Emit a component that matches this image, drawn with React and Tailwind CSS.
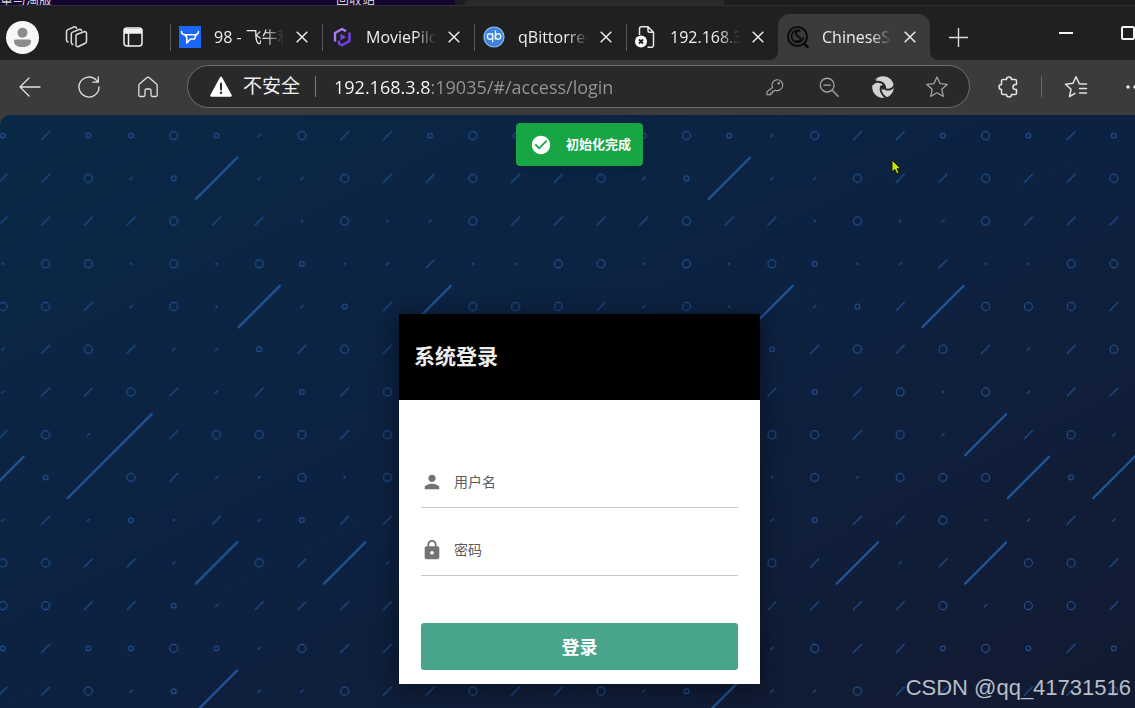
import { useState } from 'react';
import { MdPerson, MdLock, MdCheckCircle } from 'react-icons/md';

// One tile of the wallpaper: O ring, o small ring, . dot, / dash, ' short dash, L streak
const TILE = [
  "o/ooOo'O//oO",
  "//O'oL''O//O",
  "////O//.O.'O",
  ".OO.O.Oo.'/.",
  "OO/'O.L'o/LO",
  "'/O/''o/O/O/",
  "'//O/'/o/O.O",
  "/O' /OOO/O'L",
  "Lo O/'.O.OOO",
  "'/'o./'o//O.",
  "OO//'LO/L'/L",
  "OO//o'////O'",
];
const CELL = 42.73;

const Mark = ({ kind, x, y }) => {
  if (kind === 'O') return <circle cx={x} cy={y} r="4" />;
  if (kind === 'o') return <circle cx={x} cy={y} r="2.4" />;
  if (kind === '.') return <circle cx={x} cy={y} r="0.6" />;
  if (kind === '/') return <path d={`M${x - 4.4} ${y + 4.4}l8.8-8.8`} />;
  if (kind === "'") return <path d={`M${x - 1.6} ${y + 1.6}l3.2-3.2`} />;
  if (kind === 'L') return <path d={`M${x - 21.3} ${y + 21.3}l42.6-42.6`} strokeWidth="2" stroke="#215a9f" />;
  return null;
};

const Wallpaper = () => (
  <svg className="absolute inset-0 w-full h-full" aria-hidden="true">
    <defs>
      <pattern id="marks" x="-18.5" y="-0.7" width={CELL * 12} height={CELL * 12} patternUnits="userSpaceOnUse">
        <g fill="none" stroke="#21569c" strokeWidth="1">
          {TILE.map((row, r) =>
            row.split('').map((kind, c) => (
              <Mark key={`${r}-${c}`} kind={kind} x={(c + 0.5) * CELL} y={(r + 0.5) * CELL} />
            ))
          )}
          <path d={`M${CELL * 2} ${CELL * 9}L${CELL * 4} ${CELL * 7}`} strokeWidth="2" stroke="#215a9f" />
        </g>
      </pattern>
    </defs>
    <rect width="100%" height="100%" fill="url(#marks)" />
  </svg>
);

const Icon = ({ size = 24, children }) => (
  <svg
    width={size}
    height={size}
    viewBox="0 0 24 24"
    fill="none"
    stroke="currentColor"
    strokeWidth="1.5"
    strokeLinecap="round"
    strokeLinejoin="round"
    className="shrink-0"
    aria-hidden="true"
  >
    {children}
  </svg>
);

const ToolButton = ({ label, className = '', children }) => (
  <button aria-label={label} className={`w-10 h-10 shrink-0 flex items-center justify-center ${className}`}>
    {children}
  </button>
);

const FnosIcon = () => (
  <svg width="22" height="22" viewBox="0 0 22 22" className="shrink-0" aria-hidden="true">
    <rect width="22" height="22" fill="#1a66f5" />
    <path d="M2.500 5.500c0 2 1 3 3 3.200M19.500 5.500c0 2-1 3-3 3.200" fill="none" stroke="#fff" strokeWidth="1.500" strokeLinecap="round" />
    <path d="M6 8.700h11l-1.500 4.300h-4L7.800 17V11.500z" fill="none" stroke="#fff" strokeWidth="1.600" strokeLinejoin="round" />
  </svg>
);

const MoviePilotIcon = () => (
  <svg width="22" height="22" viewBox="0 0 22 22" fill="none" className="shrink-0" aria-hidden="true">
    <path d="M4 15.500V7L11 3l4 2.300" stroke="#a97bf5" strokeWidth="2.400" strokeLinejoin="round" />
    <path d="M18.500 6.500V15L11 19.300 8 17.600v-3.100" stroke="#7a3fe8" strokeWidth="2.400" strokeLinejoin="round" />
    <path d="M9.500 7.800l5.500 3.200-5.500 3.200z" fill="#7d45ea" />
  </svg>
);

const QbIcon = () => (
  <svg width="22" height="22" viewBox="0 0 22 22" fill="none" className="shrink-0" aria-hidden="true">
    <circle cx="11" cy="11" r="10" fill="#3b83dc" stroke="#8cbcf2" strokeWidth="1.200" />
    <g stroke="#e4f1ff" strokeWidth="1.400" strokeLinecap="round">
      <circle cx="7" cy="10.500" r="2.700" />
      <path d="M9.700 7.800v8M12.400 5v8" />
      <circle cx="15.100" cy="10.500" r="2.700" />
    </g>
  </svg>
);

const BrokenPageIcon = () => (
  <svg width="22" height="22" viewBox="0 0 22 22" fill="none" className="shrink-0" aria-hidden="true">
    <path d="M4.500 9V2.800a2 2 0 0 1 2-2H13l5.500 5.500v13a2 2 0 0 1-2 2h-4M13 .8v4a1.500 1.500 0 0 0 1.500 1.500h4" stroke="#e8e8e8" strokeWidth="1.500" />
    <circle cx="6" cy="15.500" r="6" fill="#fff" />
    <path d="M4 13.500l4 4M8 13.500l-4 4" stroke="#202022" strokeWidth="1.800" />
  </svg>
);

const SubFinderIcon = () => (
  <svg width="22" height="22" viewBox="0 0 22 22" fill="none" stroke="#0c0c0d" className="shrink-0" aria-hidden="true">
    <circle cx="10.500" cy="10.500" r="9.500" strokeWidth="2" />
    <path d="M12 4.500a6 6 0 1 0 4.500 6.500" strokeWidth="1.600" />
    <path d="M13.500 4.500c-4 0-5.500 2-4.500 4s4.500 2 4.500 4.500c0 2-2.500 3-5 2" strokeWidth="2" />
    <path d="M17.500 18l3 3" strokeWidth="2.600" strokeLinecap="round" />
  </svg>
);

const tabs = [
  { title: '98 - 飞牛私有云', icon: FnosIcon },
  { title: 'MoviePilot', icon: MoviePilotIcon },
  { title: 'qBittorrent', icon: QbIcon },
  { title: '192.168.3.8', icon: BrokenPageIcon },
  { title: 'ChineseSubFinder', icon: SubFinderIcon },
];

const Tab = ({ title, icon: TabIcon, active, onSelect }) => (
  <div
    className={`relative w-[152px] h-[46px] shrink-0 flex items-center pl-2 pr-[10px] border-l ${
      active ? 'bg-[#3b3b3c] border-[#3b3b3c] rounded-t-xl' : 'border-transparent'
    }`}
  >
    {!active && <span className="absolute -left-px top-[10px] h-[27px] w-px bg-[#58585a]" />}
    {active && (
      <svg className="absolute -left-[9px] bottom-0 w-2 h-2" viewBox="0 0 8 8" fill="#3b3b3c" aria-hidden="true">
        <path d="M8 0v8H0a8 8 0 0 0 8-8z" />
      </svg>
    )}
    {active && (
      <svg className="absolute -right-2 bottom-0 w-2 h-2" viewBox="0 0 8 8" fill="#3b3b3c" aria-hidden="true">
        <path d="M0 0v8h8a8 8 0 0 1-8-8z" />
      </svg>
    )}
    <TabIcon />
    <button
      onClick={onSelect}
      className="ml-[13px] mr-2 w-[70px] overflow-hidden whitespace-nowrap text-left text-base text-[#ededed] mask-r-from-70% mask-r-to-100%"
    >
      {title}
    </button>
    <button aria-label={`关闭 ${title}`} className="w-5 h-5 flex items-center justify-center text-[#ececec]">
      <svg width="12" height="12" viewBox="0 0 12 12" stroke="currentColor" strokeWidth="1.500" aria-hidden="true">
        <path d="M.7.7l10.600 10.600M11.300.7L.7 11.300" />
      </svg>
    </button>
  </div>
);

const TabBar = () => {
  const [current, setCurrent] = useState(4);

  return (
    <div className="flex h-[55px] pt-[9px] pl-[6px] bg-[#202022] border-t border-[#303032]">
      <div className="flex items-center h-[46px] -mt-px">
        <button aria-label="用户配置" className="w-[33px] h-[33px] rounded-full bg-[#f7f7f7] flex items-center justify-center">
          <svg width="33" height="33" viewBox="0 0 33 33" fill="#8b8b8b" aria-hidden="true">
            <circle cx="16.500" cy="11.700" r="5" />
            <path d="M9.500 18.500h14a1.500 1.500 0 0 1 1.500 1.500c0 4-3.500 6-8.500 6S8 24 8 20a1.500 1.500 0 0 1 1.500-1.500z" />
          </svg>
        </button>
        <ToolButton label="工作区" className="ml-[17px] text-[#dedede]">
          <Icon>
            <path d="M12.500 9.500l7.500-2.800a1.800 1.800 0 0 1 2.500 1.700v8a2 2 0 0 1-1.300 1.900l-6.700 3.200a1.800 1.800 0 0 1-2.500-1.700v-8.500a2 2 0 0 1 .5-1.800z" />
            <path d="M8.800 19.500a2 2 0 0 1-1.500-2V9a2 2 0 0 1 1.300-1.900l6.500-2.600a2 2 0 0 1 2.600 1.200" />
            <path d="M4 17a2 2 0 0 1-1.500-2V6.500a2 2 0 0 1 1.300-1.900L10 2a2 2 0 0 1 2.600 1.200" />
          </Icon>
        </ToolButton>
        <ToolButton label="标签页操作" className="ml-[17px] mr-[17px] text-[#f2f2f2]">
          <Icon>
            <rect x="3" y="3" width="18" height="18" rx="3" />
            <path d="M3.500 4.500h17V8h-17z" fill="currentColor" />
            <path d="M7.500 8v13" />
          </Icon>
        </ToolButton>
        {tabs.map((tab, i) => (
          <Tab key={tab.title} {...tab} active={i === current} onSelect={() => setCurrent(i)} />
        ))}
        <ToolButton label="新建标签页" className="ml-2 text-[#dcdcdc]">
          <svg width="19" height="19" viewBox="0 0 19 19" stroke="currentColor" strokeWidth="1.400" aria-hidden="true">
            <path d="M9.500 0v19M0 9.500h19" />
          </svg>
        </ToolButton>
      </div>
      <div className="ml-auto flex h-[36px] text-white">
        <button aria-label="最小化" className="w-[62px] flex items-center justify-center">
          <span className="w-[14px] h-[2px] bg-[#f4f4f4]" />
        </button>
        <button aria-label="最大化" className="w-[62px] flex items-center justify-center">
          <span className="w-[14px] h-[14px] border-2 border-[#f4f4f4] rounded-[2px]" />
        </button>
      </div>
    </div>
  );
};

const Toolbar = () => (
  <div className="flex items-center h-[55px] pl-[10px] pr-1 pb-[2px] bg-[#3b3b3c] text-[#e2e2e2]">
    <div className="flex gap-[19px]">
      <ToolButton label="后退">
        <Icon>
          <path d="M22 12H2M11 3l-9 9 9 9" strokeWidth="1.300" />
        </Icon>
      </ToolButton>
      <ToolButton label="刷新">
        <Icon>
          <path d="M22 12A10 10 0 1 1 19.500 5.400L21 7M21.300 1.800V7.200h-5.400" strokeWidth="1.300" />
        </Icon>
      </ToolButton>
      <ToolButton label="主页">
        <Icon>
          <path d="M2.800 10.500a2 2 0 0 1 .7-1.500l7.200-6.300a2 2 0 0 1 2.600 0L20.500 9a2 2 0 0 1 .7 1.500V20a1.500 1.500 0 0 1-1.500 1.500h-3.200A1.500 1.500 0 0 1 15 20v-4.500a1.500 1.500 0 0 0-1.500-1.500h-3A1.500 1.500 0 0 0 9 15.500V20a1.500 1.500 0 0 1-1.500 1.500H4.300A1.500 1.500 0 0 1 2.800 20z" strokeWidth="1.300" />
        </Icon>
      </ToolButton>
    </div>

    {/* Address bar */}
    <div className="flex-1 flex items-center h-[43px] ml-[19px] pl-[22px] pr-3 rounded-full border border-[#6e6e70] bg-[#29282a]">
      <svg width="22" height="22" viewBox="0 0 22 22" className="shrink-0" aria-hidden="true">
        <path d="M11 2L20.500 19.500H1.500z" fill="#fff" stroke="#fff" strokeWidth="2.600" strokeLinejoin="round" />
        <path d="M11 7.500v6" stroke="#29282a" strokeWidth="2" strokeLinecap="round" />
        <circle cx="11" cy="16.700" r="1.200" fill="#29282a" />
      </svg>
      <label htmlFor="address" className="ml-[11px] text-[19px] text-[#f0f0f0] whitespace-nowrap">不安全</label>
      <span className="w-px h-[21px] ml-[15px] mr-[18px] bg-[#7a7a7c]" />
      <input
        id="address"
        type="text"
        defaultValue="192.168.3.8:19035/#/access/login"
        className="flex-1 min-w-0 text-lg text-transparent bg-clip-text bg-linear-to-r from-[#ffffff] from-[97px] to-[#969698] to-[97px] caret-white outline-none"
      />
      <div className="flex gap-[14px] text-[#a2a2a4]">
        <ToolButton label="密码">
          <Icon size={20}>
            <path d="M9 12.700a6.500 6.500 0 1 1 3.300 3.100L11 17H9.200v2H7v2.200H2.300v-3.500z" strokeWidth="1.400" />
            <circle cx="16.500" cy="7.500" r=".8" />
          </Icon>
        </ToolButton>
        <ToolButton label="缩小">
          <Icon size={22}>
            <circle cx="10" cy="10" r="7.500" />
            <path d="M15.500 15.500l6.500 6.500M6.500 10h7" />
          </Icon>
        </ToolButton>
        <ToolButton label="兼容模式">
          <svg width="22" height="22" viewBox="0 0 22 22" fill="none" aria-hidden="true">
            <circle cx="11" cy="11" r="10.800" fill="#d2d2d4" />
            <circle cx="11.500" cy="11" r="2.600" fill="#29282a" />
            <g stroke="#29282a" strokeWidth="1.900">
              <path d="M0 8c3-3 9-3.500 12.500 1" />
              <path d="M9.300 10c-1.800 4 .2 9 5.200 12" />
              <path d="M13 13c4 1.500 8 0 9.500-4" />
            </g>
            <path d="M0 4.500L5 3 2 8.500 0 9z" fill="#29282a" />
          </svg>
        </ToolButton>
        <ToolButton label="收藏">
          <Icon size={24}>
            <path d="M12 2l3 6.600 7.200.8-5.400 4.900 1.500 7.100L12 17.800l-6.300 3.600 1.500-7.100L1.800 9.400 9 8.600z" strokeWidth="1.300" />
          </Icon>
        </ToolButton>
      </div>
    </div>

    <ToolButton label="扩展" className="ml-[19px]">
      <Icon>
        <path d="M9.500 4.500a2.500 2.500 0 0 1 5 0H18A1.500 1.500 0 0 1 19.500 6v3.500h-1a2.500 2.500 0 0 0 0 5h1V18a1.500 1.500 0 0 1-1.500 1.500h-3.500a2.500 2.500 0 0 1-5 0H6A1.500 1.500 0 0 1 4.500 18v-3.500a2.500 2.500 0 0 1 0-5V6A1.500 1.500 0 0 1 6 4.500z" />
      </Icon>
    </ToolButton>
    <span className="w-px h-[21px] ml-[12px] mr-[14px] bg-[#666668]" />
    <ToolButton label="收藏夹">
      <Icon>
        <path d="M22.500 9h-7L12 1.800l-3 6.500-7.500 1 5.500 5-1.500 7.200 5.500-3.200M15.500 13.500h7M15.500 18h7" />
      </Icon>
    </ToolButton>
    <ToolButton label="设置及其他" className="ml-[19px]">
      <svg width="20" height="4" viewBox="0 0 20 4" fill="#f0f0f0" aria-hidden="true">
        <circle cx="3" cy="2" r="1.700" />
        <circle cx="10" cy="2" r="1.700" />
        <circle cx="17" cy="2" r="1.700" />
      </svg>
    </ToolButton>
  </div>
);

const Field = ({ id, label, type, icon: FieldIcon }) => (
  <div className="flex items-center h-[51px] border-b border-[#c9c9c9]">
    <FieldIcon size={22} color="#737373" className="shrink-0" />
    <label htmlFor={id} className="ml-[11px] text-sm text-[#5c5c5c] whitespace-nowrap">{label}</label>
    <input id={id} type={type} className="flex-1 min-w-0 h-full pl-2 text-sm outline-none" />
  </div>
);

const LoginCard = () => (
  <div className="relative w-[361px] shadow-[0_4px_20px_6px_rgba(0,0,0,0.3)]">
    <div className="flex items-center h-[86px] px-[15px] bg-black">
      <h1 className="text-[21px] font-bold text-[#ededed]">系统登录</h1>
    </div>
    <form onSubmit={(e) => e.preventDefault()} className="px-[22px] pt-[57px] pb-[14px] bg-white">
      <div className="flex flex-col gap-[17px]">
        <Field id="username" label="用户名" type="text" icon={MdPerson} />
        <Field id="password" label="密码" type="password" icon={MdLock} />
      </div>
      <button type="submit" className="w-full h-[47px] mt-[47px] rounded-[3px] bg-[#48a48b] text-lg font-bold text-white">
        登录
      </button>
    </form>
  </div>
);

const App = () => {
  return (
    <div className="relative min-h-screen flex flex-col overflow-hidden bg-[#202022] font-['Open_Sans','Noto_Sans_CJK_SC',sans-serif]">
      <div className="flex-1 flex flex-col w-[calc(100%+24px)]">
        {/* Strip of the desktop behind the browser window */}
        <div className="flex items-end h-[5px] overflow-hidden bg-[#1e1e1f] text-[13px] leading-3 text-[#cfcfcf]">
          <div className="flex items-end w-[455px] h-full bg-[#12042f]">
            <span className="w-[336px]">重与淘版</span>
            <span>回收站</span>
          </div>
          <div className="w-[259px] h-full ml-[10px] rounded-tl bg-[#2a2a2d]" />
        </div>
        <TabBar />
        <Toolbar />
        <div className="flex-1 flex flex-col bg-[#3b3b3c]">
          <main className="relative flex-1 flex flex-col items-center pt-[199px] pb-6 overflow-hidden rounded-tl-[10px] bg-linear-to-br from-[#0a2847] via-[#0d2141] to-[#121a30]">
            <Wallpaper />
            <LoginCard />
            <div role="status" className="absolute top-2 flex items-center h-[43px] pl-[14px] pr-[12px] gap-[14px] rounded bg-[#18a544] text-white shadow-md">
              <MdCheckCircle size={22} />
              <span className="text-[13px] font-bold">初始化完成</span>
            </div>
          </main>
        </div>
      </div>

      <svg className="absolute left-[891px] top-[159px]" width="11" height="17" viewBox="0 0 11 17" aria-hidden="true">
        <path d="M1 1v12l2.800-2.500 2 4.500 2.200-1-2-4.300h3.700z" fill="#c3e600" stroke="#10180a" strokeWidth="1" />
      </svg>
      <p className="absolute right-1 bottom-[6px] text-[22px] leading-[29px] text-[#b9bdc4] font-['Liberation_Sans',sans-serif]">CSDN @qq_41731516</p>
    </div>
  );
};

export default App;
